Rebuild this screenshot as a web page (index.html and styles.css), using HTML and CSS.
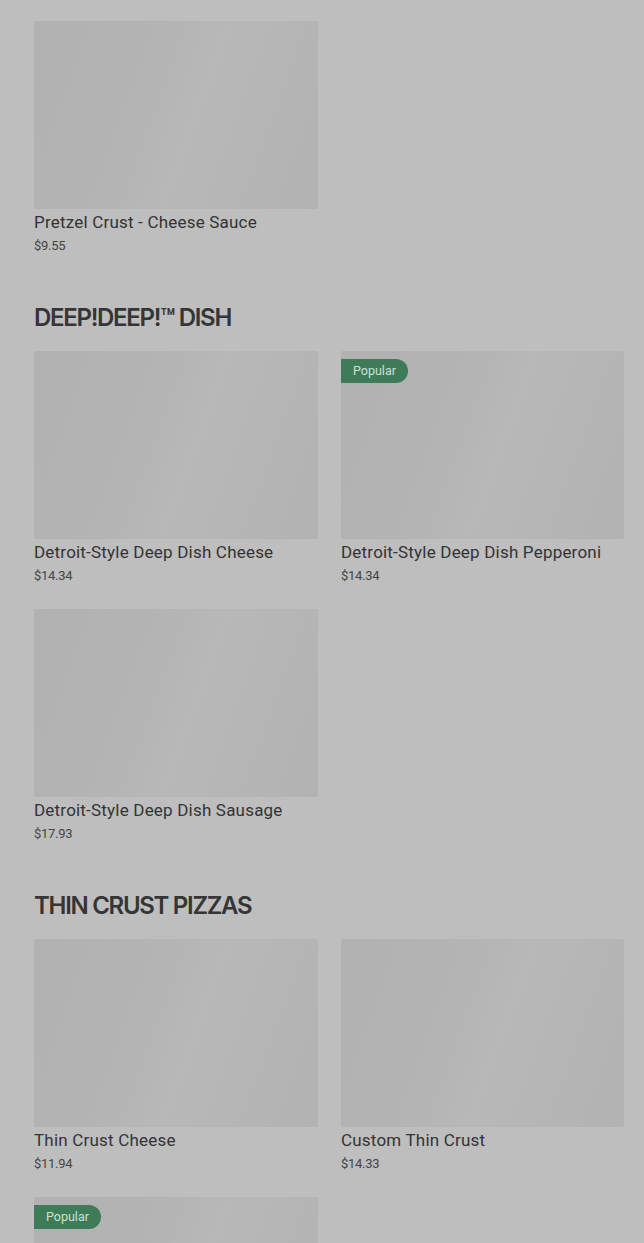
FILE: index.html
```html
<!DOCTYPE html>
<html lang="en">
<head>
    <meta charset="UTF-8">
    <meta name="viewport" content="width=device-width, initial-scale=1.0">
    <title>Menu</title>
    <link rel="stylesheet" href="styles.css">
</head>
<body>
    <div class="menu">
        <section class="menu-section first">
            <div class="item-grid">
                <div class="item">
                    <div class="item-image"></div>
                    <div class="item-name">Pretzel Crust - Cheese Sauce</div>
                    <div class="item-price">$9.55</div>
                </div>
            </div>
        </section>

        <section class="menu-section">
            <h2>DEEP!DEEP!™ DISH</h2>
            <div class="item-grid">
                <div class="item">
                    <div class="item-image"></div>
                    <div class="item-name">Detroit-Style Deep Dish Cheese</div>
                    <div class="item-price">$14.34</div>
                </div>
                <div class="item">
                    <div class="item-image">
                        <span class="badge">Popular</span>
                    </div>
                    <div class="item-name">Detroit-Style Deep Dish Pepperoni</div>
                    <div class="item-price">$14.34</div>
                </div>
                <div class="item">
                    <div class="item-image"></div>
                    <div class="item-name">Detroit-Style Deep Dish Sausage</div>
                    <div class="item-price">$17.93</div>
                </div>
            </div>
        </section>

        <section class="menu-section">
            <h2>THIN CRUST PIZZAS</h2>
            <div class="item-grid">
                <div class="item">
                    <div class="item-image"></div>
                    <div class="item-name">Thin Crust Cheese</div>
                    <div class="item-price">$11.94</div>
                </div>
                <div class="item">
                    <div class="item-image"></div>
                    <div class="item-name">Custom Thin Crust</div>
                    <div class="item-price">$14.33</div>
                </div>
                <div class="item">
                    <div class="item-image">
                        <span class="badge">Popular</span>
                    </div>
                </div>
            </div>
        </section>
    </div>
</body>
</html>
```

FILE: styles.css
```css
body {
    margin: 0;
    background-color: #bebebe;
    font-family: Roboto, "Liberation Sans", sans-serif;
    color: #383838;
    height: 1243px;
    overflow: hidden;
}

.menu {
    padding: 21px 20px 0 34px;
}

.menu-section {
    margin-top: 47px;
}

.menu-section.first {
    margin-top: 0;
}

h2 {
    font-family: Inter, "Liberation Sans", sans-serif;
    font-size: 24px;
    font-weight: 600;
    letter-spacing: -1.3px;
    line-height: 30px;
    margin: 0 0 18px 0;
    color: #353535;
}

.item-grid {
    display: grid;
    grid-template-columns: 284px 283px;
    column-gap: 23px;
    row-gap: 23px;
}

.item-image {
    position: relative;
    height: 188px;
    border-radius: 2px;
    background: linear-gradient(110deg, #b1b1b1 0%, #b4b4b4 40%, #b8b8b8 55%, #b2b2b2 100%);
}

.badge {
    position: absolute;
    top: 8px;
    left: 0;
    height: 24px;
    line-height: 24px;
    padding: 0 12px 0 12px;
    font-size: 12.5px;
    color: #cfe0d4;
    background-color: #3d7b59;
    border-radius: 0 12px 12px 0;
}

.item-name {
    font-size: 17px;
    font-weight: 400;
    line-height: 22px;
    margin-top: 2px;
    color: #333;
    letter-spacing: 0.2px;
}

.item-price {
    font-size: 13px;
    line-height: 20px;
    margin-top: 3px;
    color: #444;
    letter-spacing: -0.3px;
}
```
